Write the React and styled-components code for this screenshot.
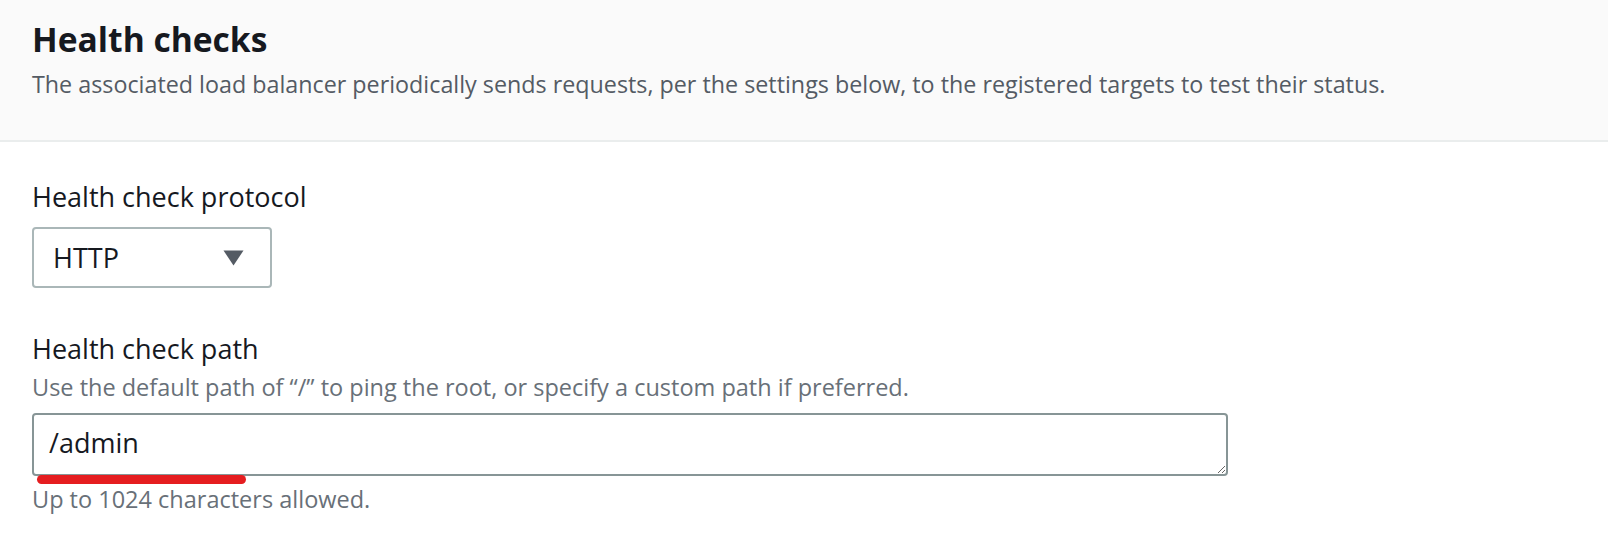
import { createGlobalStyle, styled } from "styled-components";

const GlobalStyle = createGlobalStyle`
  body {
    margin: 0;
    background: #ffffff;
    font-family: "Open Sans", "Noto Sans", sans-serif;
    color: #16191f;
  }
`;

const Panel = styled.section`
  width: 1608px;
  height: 544px;
  overflow: hidden;
`;

const Header = styled.header`
  background: #fafafa;
  border-bottom: 2px solid #eaeded;
  padding: 17px 32px 0;
  height: 123px;
`;

const Title = styled.h2`
  margin: 0;
  font-size: 33.6px;
  line-height: 44px;
  font-weight: 700;
  color: #16191f;
`;

const Description = styled.p`
  margin: 7px 0 0;
  font-size: 23.3px;
  line-height: 32px;
  color: #545b64;
`;

const Body = styled.div`
  padding: 37px 32px 0;
  display: flex;
  flex-direction: column;
  gap: 43px;
`;

const Field = styled.div`
  display: flex;
  flex-direction: column;
  align-items: flex-start;
`;

const Label = styled.label`
  font-size: 27px;
  line-height: 36px;
  color: #16191f;
`;

const Hint = styled.div`
  margin-top: ${(p) => p.$gap || 0}px;
  font-size: 23.5px;
  line-height: 32px;
  color: #687078;
`;

const Select = styled.div`
  margin-top: 12px;
  width: 240px;
  height: 61px;
  box-sizing: border-box;
  border: 2px solid #aab7b8;
  border-radius: 4px;
  display: flex;
  align-items: center;
  justify-content: space-between;
  padding: 0 26px 0 19px;
  font-size: 27px;
  color: #16191f;
`;

const TextWrap = styled.div`
  margin-top: 10px;
  position: relative;
  width: 1196px;
`;

const TextArea = styled.textarea`
  display: block;
  width: 100%;
  height: 63px;
  box-sizing: border-box;
  border: 2px solid #879596;
  border-radius: 4px;
  padding: 10px 15px 13px;
  font-family: "Open Sans", "Noto Sans", sans-serif;
  font-size: 27px;
  line-height: 36px;
  color: #16191f;
  background: #ffffff;
  resize: vertical;
  overflow: hidden;
  outline: none;
`;

const Underline = styled.span`
  position: absolute;
  left: 5px;
  top: 62px;
  width: 209px;
  height: 9px;
  border-radius: 5px;
  background: #e51d20;
`;

const Caret = () => (
  <svg width="21" height="16" viewBox="0 0 21 16">
    <path d="M0.5 0.5 H20.5 L10.5 15.5 Z" fill="#545b64" />
  </svg>
);

export default function App() {
  return (
    <Panel>
      <GlobalStyle />
      <Header>
        <Title>Health checks</Title>
        <Description>
          The associated load balancer periodically sends requests, per the settings below, to the
          registered targets to test their status.
        </Description>
      </Header>
      <Body>
        <Field>
          <Label>Health check protocol</Label>
          <Select>
            <span>HTTP</span>
            <Caret />
          </Select>
        </Field>
        <Field>
          <Label>Health check path</Label>
          <Hint $gap={4}>
            Use the default path of “/” to ping the root, or specify a custom path if preferred.
          </Hint>
          <TextWrap>
            <TextArea defaultValue="/admin" rows={1} />
            <Underline />
          </TextWrap>
          <Hint $gap={7}>Up to 1024 characters allowed.</Hint>
        </Field>
      </Body>
    </Panel>
  );
}
